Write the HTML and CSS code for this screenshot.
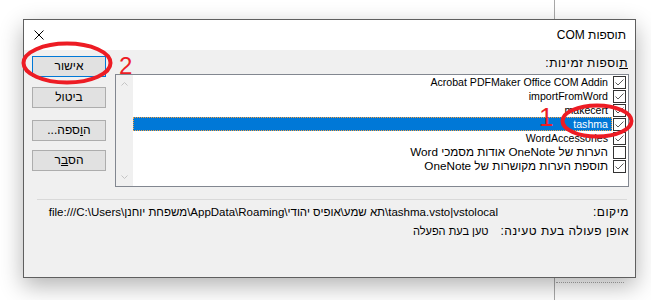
FILE: index.html
```html
<!DOCTYPE html>
<html lang="he">
<head>
<meta charset="utf-8">
<title>תוספות COM</title>
<link rel="stylesheet" href="styles.css">
</head>
<body>
<div class="stage">
  <div class="bg-line bg-line-top"></div>
  <div class="bg-line bg-line-bottom"></div>
  <div class="bg-dots"></div>

  <div class="dialog" dir="rtl">
    <div class="titlebar">
      <span class="title">תוספות COM</span>
      <svg class="close" width="10" height="10" viewBox="0 0 10 10"><path d="M0.5 0.5L9.5 9.5M9.5 0.5L0.5 9.5" stroke="#000" stroke-width="1" fill="none"/></svg>
    </div>
    <div class="body">
      <div class="top">
        <div class="main">
          <div class="list-label"><u>ת</u>וספות זמינות:</div>
          <div class="listbox">
            <div class="rows">
              <div class="row"><span class="cb"><svg width="11" height="11" viewBox="0 0 11 11"><path d="M1.5 5.5L4 8L9.5 2.5" stroke="#5a5a5a" fill="none"/></svg></span><span class="txt">Acrobat PDFMaker Office COM Addin</span></div>
              <div class="row"><span class="cb"><svg width="11" height="11" viewBox="0 0 11 11"><path d="M1.5 5.5L4 8L9.5 2.5" stroke="#5a5a5a" fill="none"/></svg></span><span class="txt">importFromWord</span></div>
              <div class="row"><span class="cb"><svg width="11" height="11" viewBox="0 0 11 11"><path d="M1.5 5.5L4 8L9.5 2.5" stroke="#5a5a5a" fill="none"/></svg></span><span class="txt">makecert</span></div>
              <div class="row sel"><span class="cb"><svg width="11" height="11" viewBox="0 0 11 11"><path d="M1.5 5.5L4 8L9.5 2.5" stroke="#5a5a5a" fill="none"/></svg></span><span class="txt">tashma</span></div>
              <div class="row"><span class="cb"><svg width="11" height="11" viewBox="0 0 11 11"><path d="M1.5 5.5L4 8L9.5 2.5" stroke="#5a5a5a" fill="none"/></svg></span><span class="txt">WordAccessories</span></div>
              <div class="row heb"><span class="cb"></span><span class="txt">הערות של OneNote אודות מסמכי Word</span></div>
              <div class="row heb"><span class="cb"><svg width="11" height="11" viewBox="0 0 11 11"><path d="M1.5 5.5L4 8L9.5 2.5" stroke="#5a5a5a" fill="none"/></svg></span><span class="txt">תוספת הערות מקושרות של OneNote</span></div>
            </div>
            <div class="scrollbar">
              <span class="arrow"><svg width="7" height="5" viewBox="0 0 7 5"><path d="M0.5 4.5L3.5 1.5L6.5 4.5" stroke="#c4c4c4" fill="none"/></svg></span>
              <span class="arrow"><svg width="7" height="5" viewBox="0 0 7 5"><path d="M0.5 0.5L3.5 3.5L6.5 0.5" stroke="#c4c4c4" fill="none"/></svg></span>
            </div>
          </div>
        </div>
        <div class="buttons">
          <button class="btn btn-default">אישור</button>
          <button class="btn btn-cancel">ביטול</button>
          <button class="btn btn-add">ה<u>ו</u>ספה...</button>
          <button class="btn btn-about">הס<u>ב</u>ר</button>
        </div>
      </div>
      <div class="sep"></div>
      <div class="info">
        <div class="info-row"><span class="lbl lbl-loc">מיקום:</span><span class="val val-path" dir="ltr">file:///C:\Users\משפחת יוחנן\AppData\Roaming\תא שמע\אופיס יהודי\tashma.vsto|vstolocal</span></div>
        <div class="info-row"><span class="lbl lbl-load">אופן פעולה בעת טעינה:</span><span class="val">טען בעת הפעלה</span></div>
      </div>
    </div>
  </div>

  <svg class="mark mark-ok" width="92" height="44" viewBox="0 0 92 44"><ellipse cx="46" cy="22" rx="43.5" ry="19.5" fill="none" stroke="#ed1c24" stroke-width="4"/></svg>
  <span class="num num-2">2</span>
  <svg class="mark mark-tashma" width="74" height="36" viewBox="0 0 74 36"><ellipse cx="37" cy="18" rx="34.5" ry="15.5" fill="none" stroke="#ed1c24" stroke-width="4"/></svg>
  <span class="num num-1">1</span>
</div>
</body>
</html>
```

FILE: styles.css
```css
* { box-sizing: border-box; }
html, body { margin: 0; padding: 0; background: #fff; }
body {
  width: 651px;
  height: 300px;
  overflow: hidden;
  font-family: "Liberation Sans", "DejaVu Sans", sans-serif;
  font-size: 11px;
  color: #000;
}
.stage {
  position: relative;
  width: 651px;
  height: 300px;
  padding: 19px 0 0 23px;
}
.bg-line { position: absolute; left: 554px; width: 1px; background: #a8a8a8; }
.bg-line-top { top: 0; height: 19px; }
.bg-line-bottom { top: 278px; height: 22px; }
.bg-dots { position: absolute; left: 556px; top: 282px; width: 68px; border-top: 1px dotted #aaa; }

.dialog {
  position: relative;
  z-index: 1;
  width: 613px;
  height: 259px;
  border: 1px solid #5f5f5f;
  background: #f0f0f0;
  box-shadow: 0 8px 22px rgba(0, 0, 0, 0.3);
  display: flex;
  flex-direction: column;
}
.titlebar {
  height: 30px;
  flex: none;
  background: #fff;
  display: flex;
  justify-content: space-between;
  align-items: center;
  padding: 0 9px 0 10px;
}
.title { font-size: 12px; }
.close { display: block; margin-top: -1px; }

.body {
  flex: 1;
  padding: 6px 6px 0 8px;
  display: flex;
  flex-direction: column;
}
.top { display: flex; gap: 9px; }
.main { flex: 1; }
.list-label {
  height: 14px;
  line-height: 14px;
  margin-bottom: 4px;
  font-size: 12px;
  letter-spacing: 0.5px;
  padding-right: 1px;
}
.list-label u { text-underline-offset: 1px; }

.listbox {
  height: 113px;
  border: 1px solid #828790;
  background: #fff;
  display: flex;
}
.rows { flex: 1; display: flex; flex-direction: column; }
.row { height: 14px; display: flex; align-items: center; padding-right: 2px; }
.cb {
  flex: none;
  width: 13px;
  height: 13px;
  border: 1px solid #333;
  background: #fff;
  margin-left: 1px;
}
.cb svg { display: block; }
.txt {
  flex: 1;
  height: 14px;
  line-height: 14px;
  padding-right: 4px;
  white-space: nowrap;
  font-size: 10.6px;
}
.row.heb .txt { font-size: 11.7px; }
.row.sel .txt {
  background: #0078d7;
  color: #fff;
  outline: 1px dotted #f5a040;
  outline-offset: -1px;
}
.scrollbar {
  width: 17px;
  flex: none;
  background: #f0f0f0;
  display: flex;
  flex-direction: column;
  justify-content: space-between;
}
.arrow { height: 17px; display: flex; align-items: center; justify-content: center; }
.arrow svg { display: block; }

.buttons { width: 74px; flex: none; display: flex; flex-direction: column; }
.btn {
  width: 74px;
  height: 21px;
  padding: 0;
  background: #e1e1e1;
  border: 1px solid #adadad;
  font-family: inherit;
  font-size: 12px;
  color: #000;
  line-height: 19px;
}
.btn-default { border-color: #0078d7; }
.btn-cancel { margin-top: 10px; }
.btn-add { margin-top: 12px; }
.btn-about { margin-top: 9px; }

.sep { height: 1px; background: #d9d9d9; margin: 12px 2px 0 5px; }

.info { margin-top: 5px; display: flex; flex-direction: column; gap: 5px; }
.info-row { display: flex; height: 14px; line-height: 14px; white-space: nowrap; }
.lbl { font-size: 12px; letter-spacing: 0.5px; }
.lbl-loc { width: 131px; flex: none; }
.lbl-load { margin-left: 12px; }
.val-path { font-size: 11.5px; }

.mark { position: absolute; z-index: 2; display: block; }
.mark-ok { left: 21px; top: 41px; }
.mark-tashma { left: 560px; top: 103px; }
.num {
  position: absolute;
  z-index: 2;
  color: #ed1c24;
  font-family: "Liberation Sans", sans-serif;
  line-height: 1;
}
.num-2 { left: 119px; top: 54px; font-size: 24px; }
.num-1 { left: 539px; top: 104px; font-size: 26px; }
```
